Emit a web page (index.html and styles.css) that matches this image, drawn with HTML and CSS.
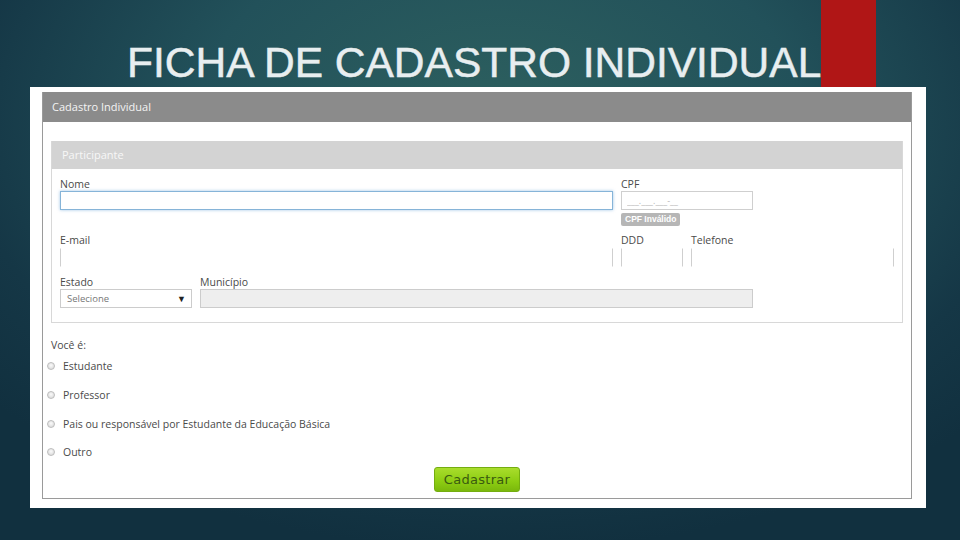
FILE: index.html
```html
<!DOCTYPE html>
<html lang="pt-BR">
<head>
  <meta charset="UTF-8">
  <meta name="viewport" content="width=device-width, initial-scale=1.0">
  <title>Ficha de Cadastro Individual</title>
  <link rel="stylesheet" href="styles.css">
</head>
<body>
  <!-- Slide Title -->
  <header class="slide-header">
    <h1>FICHA DE CADASTRO INDIVIDUAL</h1>
    <div class="red-bar"></div>
  </header>

  <!-- Screenshot Frame -->
  <div class="frame">
    <div class="panel">
      <div class="panel-title">Cadastro Individual</div>

      <div class="panel-body">
        <div class="fieldset">
          <div class="fieldset-title">Participante</div>

          <div class="fieldset-body">
            <div class="row row-1">
              <div class="field">
                <label>Nome</label>
                <input type="text" class="input focus">
              </div>
              <div class="field">
                <label>CPF</label>
                <input type="text" class="input" placeholder="___.___.___-__">
                <span class="badge">CPF Inválido</span>
              </div>
            </div>

            <div class="row row-2">
              <div class="field">
                <label>E-mail</label>
                <input type="text" class="input sides">
              </div>
              <div class="field">
                <label>DDD</label>
                <input type="text" class="input sides">
              </div>
              <div class="field">
                <label>Telefone</label>
                <input type="text" class="input sides">
              </div>
            </div>

            <div class="row row-3">
              <div class="field">
                <label>Estado</label>
                <div class="select">
                  <span>Selecione</span>
                  <span class="arrow">&#9660;</span>
                </div>
              </div>
              <div class="field">
                <label>Município</label>
                <input type="text" class="input disabled" disabled>
              </div>
            </div>
          </div>
        </div>

        <p class="question">Você é:</p>
        <ul class="options">
          <li><input type="radio" name="tipo"> <span>Estudante</span></li>
          <li><input type="radio" name="tipo"> <span>Professor</span></li>
          <li><input type="radio" name="tipo"> <span>Pais ou responsável por Estudante da Educação Básica</span></li>
          <li><input type="radio" name="tipo"> <span>Outro</span></li>
        </ul>

        <div class="actions">
          <button class="btn-submit">Cadastrar</button>
        </div>
      </div>
    </div>
  </div>
</body>
</html>
```

FILE: styles.css
```css
/* General Styles */
html, body {
  margin: 0;
  padding: 0;
}

body {
  width: 960px;
  height: 540px;
  overflow: hidden;
  font-family: "Open Sans", Arial, sans-serif;
  background: radial-gradient(ellipse 70% 80% at 52% 22%, #2d605f 0%, #22515a 45%, #153746 80%, #11303f 100%);
}

/* Slide Header */
.slide-header {
  display: grid;
  grid-template-columns: 821px 55px;
  height: 87px;
}

.slide-header h1 {
  margin: 0;
  padding: 40px 0 0 127px;
  font-family: "Liberation Sans", Arial, sans-serif;
  font-weight: normal;
  font-size: 42.5px;
  line-height: 46px;
  color: #e8eef0;
  -webkit-text-stroke: 0.5px #e8eef0;
  white-space: nowrap;
}

.red-bar {
  background-color: #b01616;
}

/* Frame */
.frame {
  margin-left: 30px;
  width: 896px;
  height: 421px;
  box-sizing: border-box;
  background: white;
  padding: 5px 14px 9px 12px;
}

.panel {
  height: 407px;
  box-sizing: border-box;
  border: 1px solid #9a9a9a;
  border-top: none;
}

.panel-title {
  background-color: #8b8b8b;
  height: 30px;
  line-height: 30px;
  padding-left: 9px;
  color: #f4f4f4;
  font-size: 11px;
}

.panel-body {
  padding: 19px 8px 0 8px;
}

/* Fieldset */
.fieldset {
  border: 1px solid #d8d8d8;
  border-top: none;
}

.fieldset-title {
  background-color: #d3d3d3;
  height: 28px;
  line-height: 28px;
  padding-left: 10px;
  color: #f7f7f7;
  font-size: 11px;
}

.fieldset-body {
  padding: 8px 8px 14px 8px;
}

.row {
  display: grid;
  column-gap: 8px;
}

.row-1 {
  grid-template-columns: 553px 132px;
}

.row-2 {
  grid-template-columns: 553px 62px 203px;
  margin-top: 7px;
}

.row-3 {
  grid-template-columns: 132px 553px;
  margin-top: 8px;
}

.field {
  display: flex;
  flex-direction: column;
  align-items: flex-start;
}

.field label {
  font-size: 10.5px;
  line-height: 14px;
  color: #4a4a4a;
}

.input {
  width: 100%;
  height: 19px;
  box-sizing: border-box;
  margin: 0;
  border: 1px solid #cfcfcf;
  border-radius: 0;
  padding: 0 5px;
  font-family: "Open Sans", Arial, sans-serif;
  font-size: 9px;
  background: white;
  outline: none;
}

.input::placeholder {
  color: #b8b8b8;
}

.input.focus {
  border-color: #86b4d8;
  box-shadow: 0 0 3px rgba(82, 150, 210, 0.55);
}

.input.sides {
  margin-top: 1px;
  border-top-color: transparent;
  border-bottom-color: transparent;
}

.input.disabled {
  background-color: #eeeeee;
  border-color: #cccccc;
}

.badge {
  margin-top: 3px;
  background-color: #b6b6b6;
  color: white;
  font-family: "Liberation Sans", Arial, sans-serif;
  font-weight: bold;
  font-size: 8.5px;
  line-height: 13px;
  padding: 0 4px;
  border-radius: 2px;
}

.select {
  width: 100%;
  height: 19px;
  box-sizing: border-box;
  border: 1px solid #cccccc;
  display: flex;
  align-items: center;
  justify-content: space-between;
  padding: 0 5px 0 6px;
  font-size: 9.5px;
  color: #777;
}

.select .arrow {
  font-size: 9px;
  color: #222;
}

/* Question */
.question {
  margin: 15px 0 0 0;
  font-size: 10.5px;
  line-height: 14px;
  color: #4a4a4a;
}

.options {
  list-style-type: none;
  margin: 0 0 0 -4px;
  padding: 0;
}

.options li {
  display: flex;
  align-items: center;
  height: 28.7px;
  font-size: 10.5px;
  color: #4a4a4a;
}

.options input[type="radio"] {
  appearance: none;
  -webkit-appearance: none;
  width: 8px;
  height: 8px;
  margin: 0 8px 0 0;
  border: 1px solid #bdbdbd;
  border-radius: 50%;
  background: radial-gradient(circle at 50% 40%, #fafafa, #d4d4d4);
}

/* Submit Button */
.actions {
  text-align: center;
}

.btn-submit {
  width: 86px;
  height: 25px;
  border: 1px solid #74ad10;
  border-radius: 3px;
  background: linear-gradient(#a9dd2c, #8ccc12 60%, #7ab80c);
  color: #3a5a10;
  font-family: "DejaVu Sans", Verdana, sans-serif;
  font-size: 13px;
  letter-spacing: 0.3px;
  padding: 0;
  vertical-align: top;
}
```
